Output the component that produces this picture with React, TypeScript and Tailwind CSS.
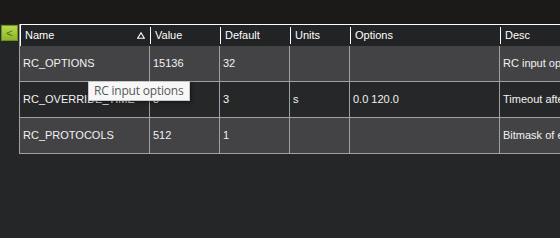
import React from "react";

type Row = {
  name: string;
  value: string;
  def: string;
  units: string;
  options: string;
  desc: string;
};

const rows: Row[] = [
  { name: "RC_OPTIONS", value: "15136", def: "32", units: "", options: "", desc: "RC input options" },
  { name: "RC_OVERRIDE_TIME", value: "3", def: "3", units: "s", options: "0.0 120.0", desc: "Timeout after which RC overrides will no longer be used" },
  { name: "RC_PROTOCOLS", value: "512", def: "1", units: "", options: "", desc: "Bitmask of enabled RC protocols" },
];

const cols = "grid grid-cols-[130px_70px_70px_60px_150px_1fr]";
const headers = ["Name", "Value", "Default", "Units", "Options", "Desc"];

function SortGlyph() {
  return (
    <svg width="8" height="7" viewBox="0 0 8 7" className="mr-[5px]">
      <path d="M4 0.8 L7.3 6.2 L0.7 6.2 Z" fill="none" stroke="#ffffff" strokeWidth="1.1" />
    </svg>
  );
}

export default function App() {
  return (
    <div
      className="w-[560px] h-[238px] overflow-hidden bg-[#252628] flex flex-col text-[11px] text-[#f2f2f2]"
      style={{ fontFamily: '"Liberation Sans", Arial, sans-serif' }}
    >
      {/* top strip */}
      <div className="h-[24px] shrink-0 bg-[#1b1a18]" />

      <div className="flex">
        {/* collapse button column */}
        <div className="w-[19px] shrink-0 pt-[1px] pl-[1px]">
          <div className="w-[17px] h-[16px] bg-gradient-to-b from-[#b5d84e] to-[#8fb52a] border border-[#6d8f1c] flex items-center justify-center text-[#4b6a0c] text-[11px] leading-none">
            &lt;
          </div>
        </div>

        {/* table */}
        <div className="w-[560px] shrink-0 border-l border-[#a0a0a0] relative">
          {/* header */}
          <div className={`${cols} h-[22px] border-t border-white bg-[#222325]`}>
            {headers.map((h, i) => (
              <div key={h} className="flex items-stretch">
                <div className={`w-px bg-white ${i === 0 ? "" : "my-[2px]"}`} />
                <div className="flex-1 flex items-center justify-between pl-[4px] text-white">
                  <span>{h}</span>
                  {i === 0 && <SortGlyph />}
                </div>
              </div>
            ))}
          </div>

          {/* body */}
          {rows.map((r, i) => (
            <div
              key={r.name}
              className={`${cols} h-[36px] border-b border-[#a0a0a0] ${i % 2 === 0 ? "bg-[#434345]" : "bg-[#262729]"}`}
            >
              {[r.name, r.value, r.def, r.units, r.options, r.desc].map((c, j) => (
                <div
                  key={j}
                  className={`flex items-center whitespace-nowrap overflow-hidden ${j === 0 ? "pl-[3px]" : "pl-[3px]"} ${j < 5 ? "border-r border-[#a0a0a0]" : ""}`}
                >
                  {c}
                </div>
              ))}
            </div>
          ))}

          {/* tooltip */}
          <div
            className="absolute left-[68px] top-[57px] h-[20px] px-[5px] flex items-center bg-[#f7f7f7] border border-[#c8c8c8] shadow-[2px_2px_3px_rgba(0,0,0,0.35)] text-[#575757] text-[12px] whitespace-nowrap"
            style={{ fontFamily: '"Open Sans", "Noto Sans", sans-serif', letterSpacing: "-0.2px" }}
          >
            RC input options
          </div>
        </div>
      </div>
    </div>
  );
}
